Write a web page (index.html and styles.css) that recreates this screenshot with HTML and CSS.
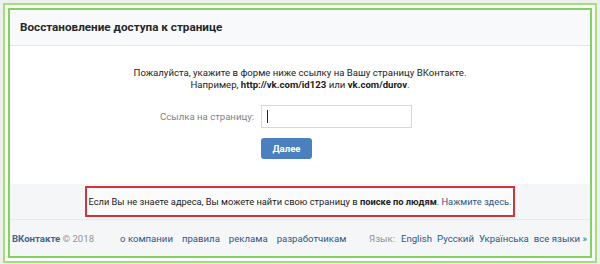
FILE: index.html
```html
<!DOCTYPE html>
<html lang="ru">
<head>
    <meta charset="UTF-8">
    <title>Восстановление доступа к странице</title>
    <link rel="stylesheet" href="styles.css">
</head>
<body>
    <div class="frame">
        <div class="page">
            <div class="page-header">Восстановление доступа к странице</div>
            <div class="page-body">
                <p class="intro">
                    Пожалуйста, укажите в форме ниже ссылку на Вашу страницу ВКонтакте.<br>
                    Например, <b>http://vk.com/id123</b> или <b>vk.com/durov</b>.
                </p>
                <div class="form-row">
                    <label for="link" class="form-label">Ссылка на страницу:</label>
                    <div class="input-box"><span class="caret"></span></div>
                </div>
                <div class="form-row">
                    <span class="form-label"></span>
                    <button type="button" class="btn">Далее</button>
                </div>
            </div>
            <div class="hint-strip">
                <div class="hint">
                    Если Вы не знаете адреса, Вы можете найти свою страницу в <b>поиске по людям</b>. <a href="#">Нажмите здесь.</a>
                </div>
            </div>
            <div class="footer">
                <div class="copy"><span class="brand">ВКонтакте</span> © 2018</div>
                <div class="footer-links">
                    <a href="#">о компании</a>
                    <a href="#">правила</a>
                    <a href="#">реклама</a>
                    <a href="#">разработчикам</a>
                </div>
                <div class="langs">
                    <span class="muted">Язык:</span>
                    <a href="#">English</a>
                    <a href="#">Русский</a>
                    <a href="#">Українська</a>
                    <a href="#">все языки »</a>
                </div>
            </div>
        </div>
    </div>
</body>
</html>
```

FILE: styles.css
```css
html, body {
    margin: 0;
    height: 100%;
}
body {
    background: #eef0ec;
    font-family: Roboto, "Liberation Sans", Arial, sans-serif;
    font-size: 9.6px;
    color: #222;
    white-space: nowrap;
}
.frame {
    box-sizing: border-box;
    height: calc(100% - 4px);
    margin: 3px 3px 1px;
    padding: 3px;
    border: 2px solid #a6dc86;
    background: #f7faf5;
}
.page {
    box-sizing: border-box;
    height: 100%;
    border: 2px solid #86cf62;
    background: #fff;
    display: flex;
    flex-direction: column;
}
.page-header {
    height: 35px;
    line-height: 35px;
    padding-left: 10px;
    background: #f8f9fb;
    border-bottom: 1px solid #e7e8ec;
    font-weight: bold;
    font-size: 11.7px;
    color: #26272a;
}
.page-body {
    padding: 21px 0 0;
    height: 138px;
    box-sizing: border-box;
}
.intro {
    margin: 0 0 14px;
    text-align: center;
    line-height: 12px;
}
.form-row {
    display: flex;
    align-items: center;
    gap: 7px;
    margin-bottom: 10px;
}
.form-label {
    width: 244px;
    text-align: right;
    color: #828282;
}
.input-box {
    width: 144px;
    height: 21px;
    border: 1px solid #d3d9de;
    display: flex;
    align-items: center;
    padding-left: 5px;
    box-sizing: content-box;
}
.caret {
    width: 1px;
    height: 13px;
    background: #222;
}
.btn {
    width: 51px;
    height: 21px;
    border: none;
    border-radius: 3px;
    background: #4a80bd;
    color: #fff;
    font-family: inherit;
    font-size: 9.6px;
    font-weight: bold;
    padding: 0;
}
.hint-strip {
    background: #f5f6f8;
    padding: 2px 0 2px;
    display: flex;
    justify-content: center;
    border-bottom: 1px solid #e7e8ec;
}
.hint {
    width: 426px;
    height: 27px;
    line-height: 27px;
    border: 2px solid #d0343d;
    background: #fbfbfc;
    text-align: center;
    font-size: 9.3px;
    color: #222;
}
a {
    color: #2a5885;
    text-decoration: none;
}
.footer {
    flex: 1;
    display: flex;
    align-items: center;
    padding: 0 3px 0 2px;
    background: #f5f6f8;
    color: #939393;
}
.brand {
    color: #3d6792;
    font-weight: bold;
}
.footer-links {
    margin-left: 26px;
    display: flex;
    gap: 9px;
}
.langs {
    margin-left: auto;
    display: flex;
    gap: 5px;
}
.muted {
    color: #939393;
    margin-right: 1px;
}
```
